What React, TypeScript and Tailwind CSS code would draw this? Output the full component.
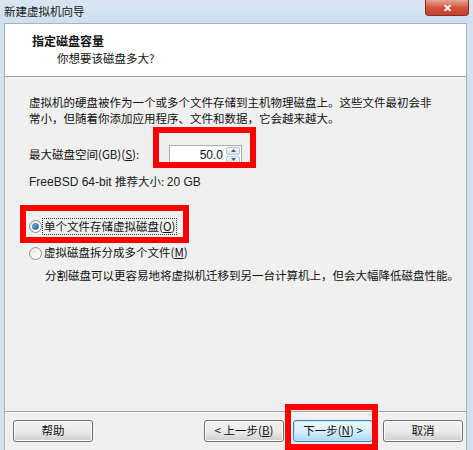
import React from 'react';

const font = { fontFamily: '"Noto Sans CJK SC", "Liberation Sans", sans-serif' };

// Windows 7 style radio button
const Radio: React.FC<{ checked?: boolean }> = ({ checked }) => (
  <span className="inline-flex w-[13px] h-[13px] rounded-full border border-[#8e8f8f] bg-gradient-to-br from-[#e6e6e6] to-[#ffffff] items-center justify-center shrink-0">
    {checked && <span className="w-[7px] h-[7px] rounded-full bg-gradient-to-br from-[#7fc2ef] to-[#1c5a91] border border-[#2a6ea8]" />}
  </span>
);

const Btn: React.FC<{ children: React.ReactNode; primary?: boolean; className?: string }> = ({ children, primary, className }) => (
  <div
    className={`h-[22px] w-[80px] rounded-[3px] border flex items-center justify-center text-[11.5px] text-[#111] ${
      primary
        ? 'border-[#3c7fb1] bg-gradient-to-b from-[#eaf6fd] via-[#d9f0fc] to-[#a7d9f5] shadow-[inset_0_0_0_1px_#c6e6f8]'
        : 'border-[#707070] bg-gradient-to-b from-[#f2f2f2] via-[#ebebeb] to-[#cfcfcf] shadow-[inset_0_0_0_1px_#fcfcfc]'
    } ${className ?? ''}`}
  >
    {children}
  </div>
);

export default function App() {
  return (
    <div className="relative w-[473px] h-[450px] overflow-hidden bg-[#d3e1f1]" style={font}>
      {/* title bar */}
      <div className="h-[23px] flex items-center pl-[4px] text-[11.5px] text-[#1a1a1a] bg-gradient-to-b from-[#d8e5f3] to-[#cfdfef]">
        新建虚拟机向导
      </div>
      <div className="absolute left-[425px] top-0 w-[44px] h-[16px] rounded-b-[4px] border border-t-0 border-[#8a2b22] bg-gradient-to-b from-[#e8a497] via-[#d4553f] to-[#c2402c] flex items-center justify-center text-white text-[11px] font-bold leading-none">
        ✕
      </div>

      {/* inner window */}
      <div className="ml-[4px] mr-[6px] h-[427px] flex flex-col border-l border-r border-t border-[#a3b3c4] bg-[#f0f0f0]">
        {/* header */}
        <div className="h-[53px] bg-white border-b border-[#a0a0a0] pt-[9px] pl-[27px]">
          <div className="text-[12px] font-bold text-[#111] leading-[16px]">指定磁盘容量</div>
          <div className="text-[11.5px] text-[#111] leading-[16px] mt-[1px] pl-[25px]">你想要该磁盘多大?</div>
        </div>

        {/* body */}
        <div className="flex-1 pl-[24px] pt-[17px] text-[11.5px] text-[#111]">
          <div className="leading-[16px]">
            虚拟机的硬盘被作为一个或多个文件存储到主机物理磁盘上。这些文件最初会非
            <br />
            常小，但随着你添加应用程序、文件和数据，它会越来越大。
          </div>

          <div className="flex items-center mt-[19px] h-[20px]">
            <span className="w-[140px]">
              最大磁盘空间(GB)(<span className="underline">S</span>):
            </span>
            <div className="flex h-[20px] w-[73px] border border-[#abadb3] bg-white">
              <div className="flex-1 flex items-center justify-end pr-[3px] text-[12px] text-[#111]" style={{ fontFamily: '"Liberation Sans", sans-serif' }}>
                50.0
              </div>
              <div className="w-[15px] flex flex-col gap-[1px] py-[1px] pr-[1px]">
                <div className="flex-1 rounded-[2px] border border-[#b7c3cf] bg-gradient-to-b from-[#f4f7fa] to-[#d9e2ea] flex items-center justify-center">
                  <svg width="5" height="3" viewBox="0 0 5 3"><path d="M0 3 L2.5 0 L5 3Z" fill="#3d5c7c" /></svg>
                </div>
                <div className="flex-1 rounded-[2px] border border-[#b7c3cf] bg-gradient-to-b from-[#f4f7fa] to-[#d9e2ea] flex items-center justify-center">
                  <svg width="5" height="3" viewBox="0 0 5 3"><path d="M0 0 L2.5 3 L5 0Z" fill="#3d5c7c" /></svg>
                </div>
              </div>
            </div>
          </div>

          <div className="mt-[8px] leading-[16px] text-[#222]">
            <span style={{ fontFamily: '"Liberation Sans", sans-serif' }} className="text-[12px]">FreeBSD 64-bit </span>
            推荐大小: <span style={{ fontFamily: '"Liberation Sans", sans-serif' }} className="text-[12px]">20 GB</span>
          </div>

          <div className="mt-[28px] flex items-center gap-[1px] h-[16px]">
            <Radio checked />
            <span className="outline outline-1 outline-dotted outline-[#333] px-[1px] leading-[15px]">
              单个文件存储虚拟磁盘(<span className="underline">O</span>)
            </span>
          </div>

          <div className="mt-[11px] flex items-center gap-[1px] h-[16px]">
            <Radio />
            <span className="px-[1px]">
              虚拟磁盘拆分成多个文件(<span className="underline">M</span>)
            </span>
          </div>

          <div className="mt-[6px] pl-[16px] leading-[16px]">分割磁盘可以更容易地将虚拟机迁移到另一台计算机上，但会大幅降低磁盘性能。</div>
        </div>

        {/* footer */}
        <div className="h-[39px] border-t border-[#a0a0a0] shadow-[inset_0_1px_0_#ffffff] flex items-start pt-[8px] pl-[8px]">
          <Btn>帮助</Btn>
          <Btn className="ml-[111px]">
            &lt; 上一步(<span className="underline">B</span>)
          </Btn>
          <Btn primary className="ml-[9px] w-[78px]">
            下一步(<span className="underline">N</span>) &gt;
          </Btn>
          <Btn className="ml-[10px]">取消</Btn>
        </div>
      </div>

      {/* red annotation boxes */}
      <div className="absolute left-[153px] top-[127px] w-[103px] h-[41px] border-[6px] border-[#ff0000]" />
      <div className="absolute left-[20px] top-[205px] w-[169px] h-[38px] border-[6px] border-[#ff0000]" />
      <div className="absolute left-[285px] top-[404px] w-[93px] h-[46px] border-[6px] border-[#ff0000]" />
    </div>
  );
}
